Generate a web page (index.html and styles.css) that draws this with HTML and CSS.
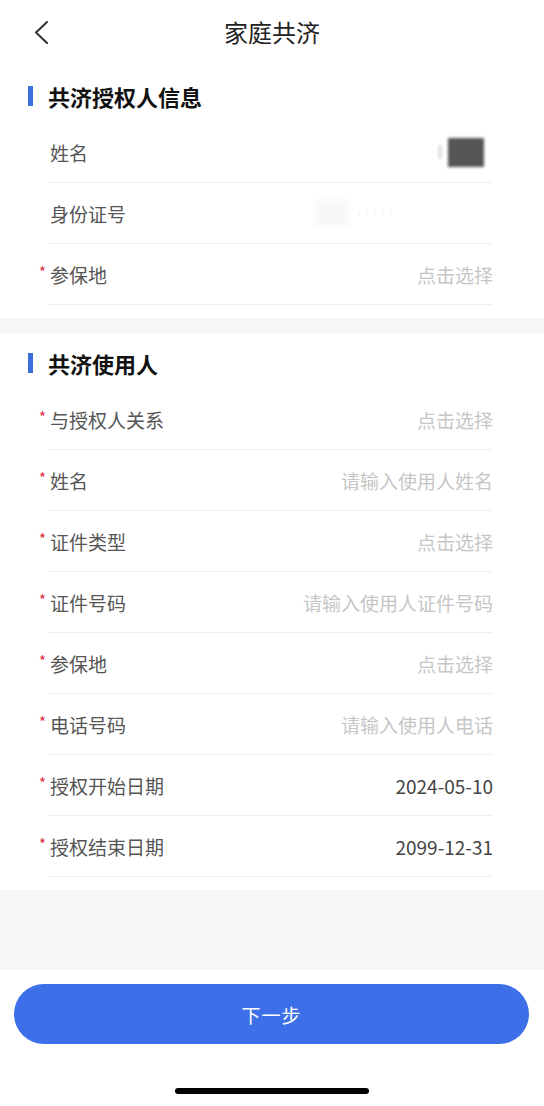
FILE: index.html
```html
<!DOCTYPE html>
<html lang="zh-CN">
  <head>
    <meta charset="UTF-8" />
    <meta name="viewport" content="width=device-width, initial-scale=1.0" />
    <title>家庭共济</title>
    <link rel="stylesheet" href="styles.css">
  </head>

  <body>
    <div class="page">
      <header class="nav">
        <span class="nav-back">
          <svg width="16" height="24" viewBox="0 0 16 24">
            <polyline points="13,2 2,12.5 13,23" fill="none" stroke="#333" stroke-width="2" stroke-linecap="round" stroke-linejoin="round" />
          </svg>
        </span>
        <h1 class="nav-title">家庭共济</h1>
        <span></span>
      </header>

      <section class="card">
        <h2 class="card-title">共济授权人信息</h2>
        <div class="form-row">
          <span class="label">姓名</span>
          <span class="value">
            <span class="mask-hint"></span>
            <span class="mask-name"></span>
          </span>
        </div>
        <div class="form-row">
          <span class="label">身份证号</span>
          <span class="value value-id">
            <span class="mask-id"></span>
            <span class="mask-dots">·····</span>
          </span>
        </div>
        <div class="form-row">
          <span class="label req">参保地</span>
          <span class="value placeholder">点击选择</span>
        </div>
      </section>

      <div class="gap"></div>

      <section class="card">
        <h2 class="card-title">共济使用人</h2>
        <div class="form-row">
          <span class="label req">与授权人关系</span>
          <span class="value placeholder">点击选择</span>
        </div>
        <div class="form-row">
          <span class="label req">姓名</span>
          <span class="value placeholder">请输入使用人姓名</span>
        </div>
        <div class="form-row">
          <span class="label req">证件类型</span>
          <span class="value placeholder">点击选择</span>
        </div>
        <div class="form-row">
          <span class="label req">证件号码</span>
          <span class="value placeholder">请输入使用人证件号码</span>
        </div>
        <div class="form-row">
          <span class="label req">参保地</span>
          <span class="value placeholder">点击选择</span>
        </div>
        <div class="form-row">
          <span class="label req">电话号码</span>
          <span class="value placeholder">请输入使用人电话</span>
        </div>
        <div class="form-row">
          <span class="label req">授权开始日期</span>
          <span class="value">2024-05-10</span>
        </div>
        <div class="form-row">
          <span class="label req">授权结束日期</span>
          <span class="value">2099-12-31</span>
        </div>
      </section>

      <div class="filler"></div>

      <footer class="footer">
        <button class="next-btn">下一步</button>
        <div class="home-bar"></div>
      </footer>
    </div>
  </body>
</html>
```

FILE: styles.css
```css
* {
  box-sizing: border-box;
}

body {
  margin: 0;
  background: #fff;
  font-family: "Noto Sans CJK SC", "Noto Sans", sans-serif;
  color: #333;
}

.page {
  width: 544px;
  min-height: 1106px;
  display: flex;
  flex-direction: column;
}

.nav {
  height: 66px;
  display: grid;
  grid-template-columns: 1fr auto 1fr;
  align-items: center;
}

.nav-back {
  padding-left: 34px;
  display: flex;
  align-items: center;
  height: 24px;
  margin-top: -2px;
}

.nav-title {
  margin: 0;
  font-size: 24px;
  font-weight: 400;
  color: #222;
  line-height: 24px;
  margin-top: -2px;
}

.card {
  background: #fff;
  padding-bottom: 13px;
}

.card-title {
  margin: 0;
  padding: 20px 0 16px 28px;
  display: flex;
  align-items: center;
  gap: 15px;
  font-size: 22px;
  font-weight: 700;
  line-height: 20px;
  color: #111;
}

.card-title::before {
  content: "";
  width: 5px;
  height: 20px;
  background: #3b6fde;
}

.form-row {
  height: 61px;
  margin: 0 51px 0 48px;
  border-bottom: 1px solid #efefef;
  display: flex;
  align-items: center;
  justify-content: space-between;
  font-size: 19px;
}

.label {
  padding-left: 2px;
  color: #555;
  display: flex;
  align-items: center;
}

.label.req::before {
  content: "*";
  color: #e02b3a;
  font-size: 15px;
  width: 11px;
  margin-left: -11px;
  margin-top: -5px;
}

.value {
  color: #444;
  display: flex;
  align-items: center;
}

.placeholder {
  color: #c6c6c6;
}

.mask-name {
  width: 36px;
  height: 29px;
  margin-right: 9px;
  background: #555;
  filter: blur(1.5px);
}

.mask-hint {
  width: 4px;
  height: 14px;
  margin-right: 6px;
  background: #e4e4e4;
  filter: blur(1px);
}

.value-id {
  margin-right: 98px;
  gap: 6px;
}

.mask-id {
  width: 33px;
  height: 26px;
  background: #f7f7f7;
  filter: blur(2px);
}

.mask-dots {
  font-size: 8px;
  color: #ebebeb;
}

.gap {
  height: 15px;
  background: #f5f6f8;
}

.filler {
  height: 80px;
  background: #f5f6f8;
}

.footer {
  flex: 1;
  padding: 14px 15px 12px 14px;
  display: flex;
  flex-direction: column;
  align-items: center;
}

.next-btn {
  width: 100%;
  height: 60px;
  border: none;
  border-radius: 30px;
  background: #3d6fe8;
  color: #fff;
  font-family: inherit;
  font-size: 19px;
  letter-spacing: 1px;
}

.home-bar {
  margin-top: 44px;
  width: 194px;
  height: 6px;
  border-radius: 3px;
  background: #000;
}
```
